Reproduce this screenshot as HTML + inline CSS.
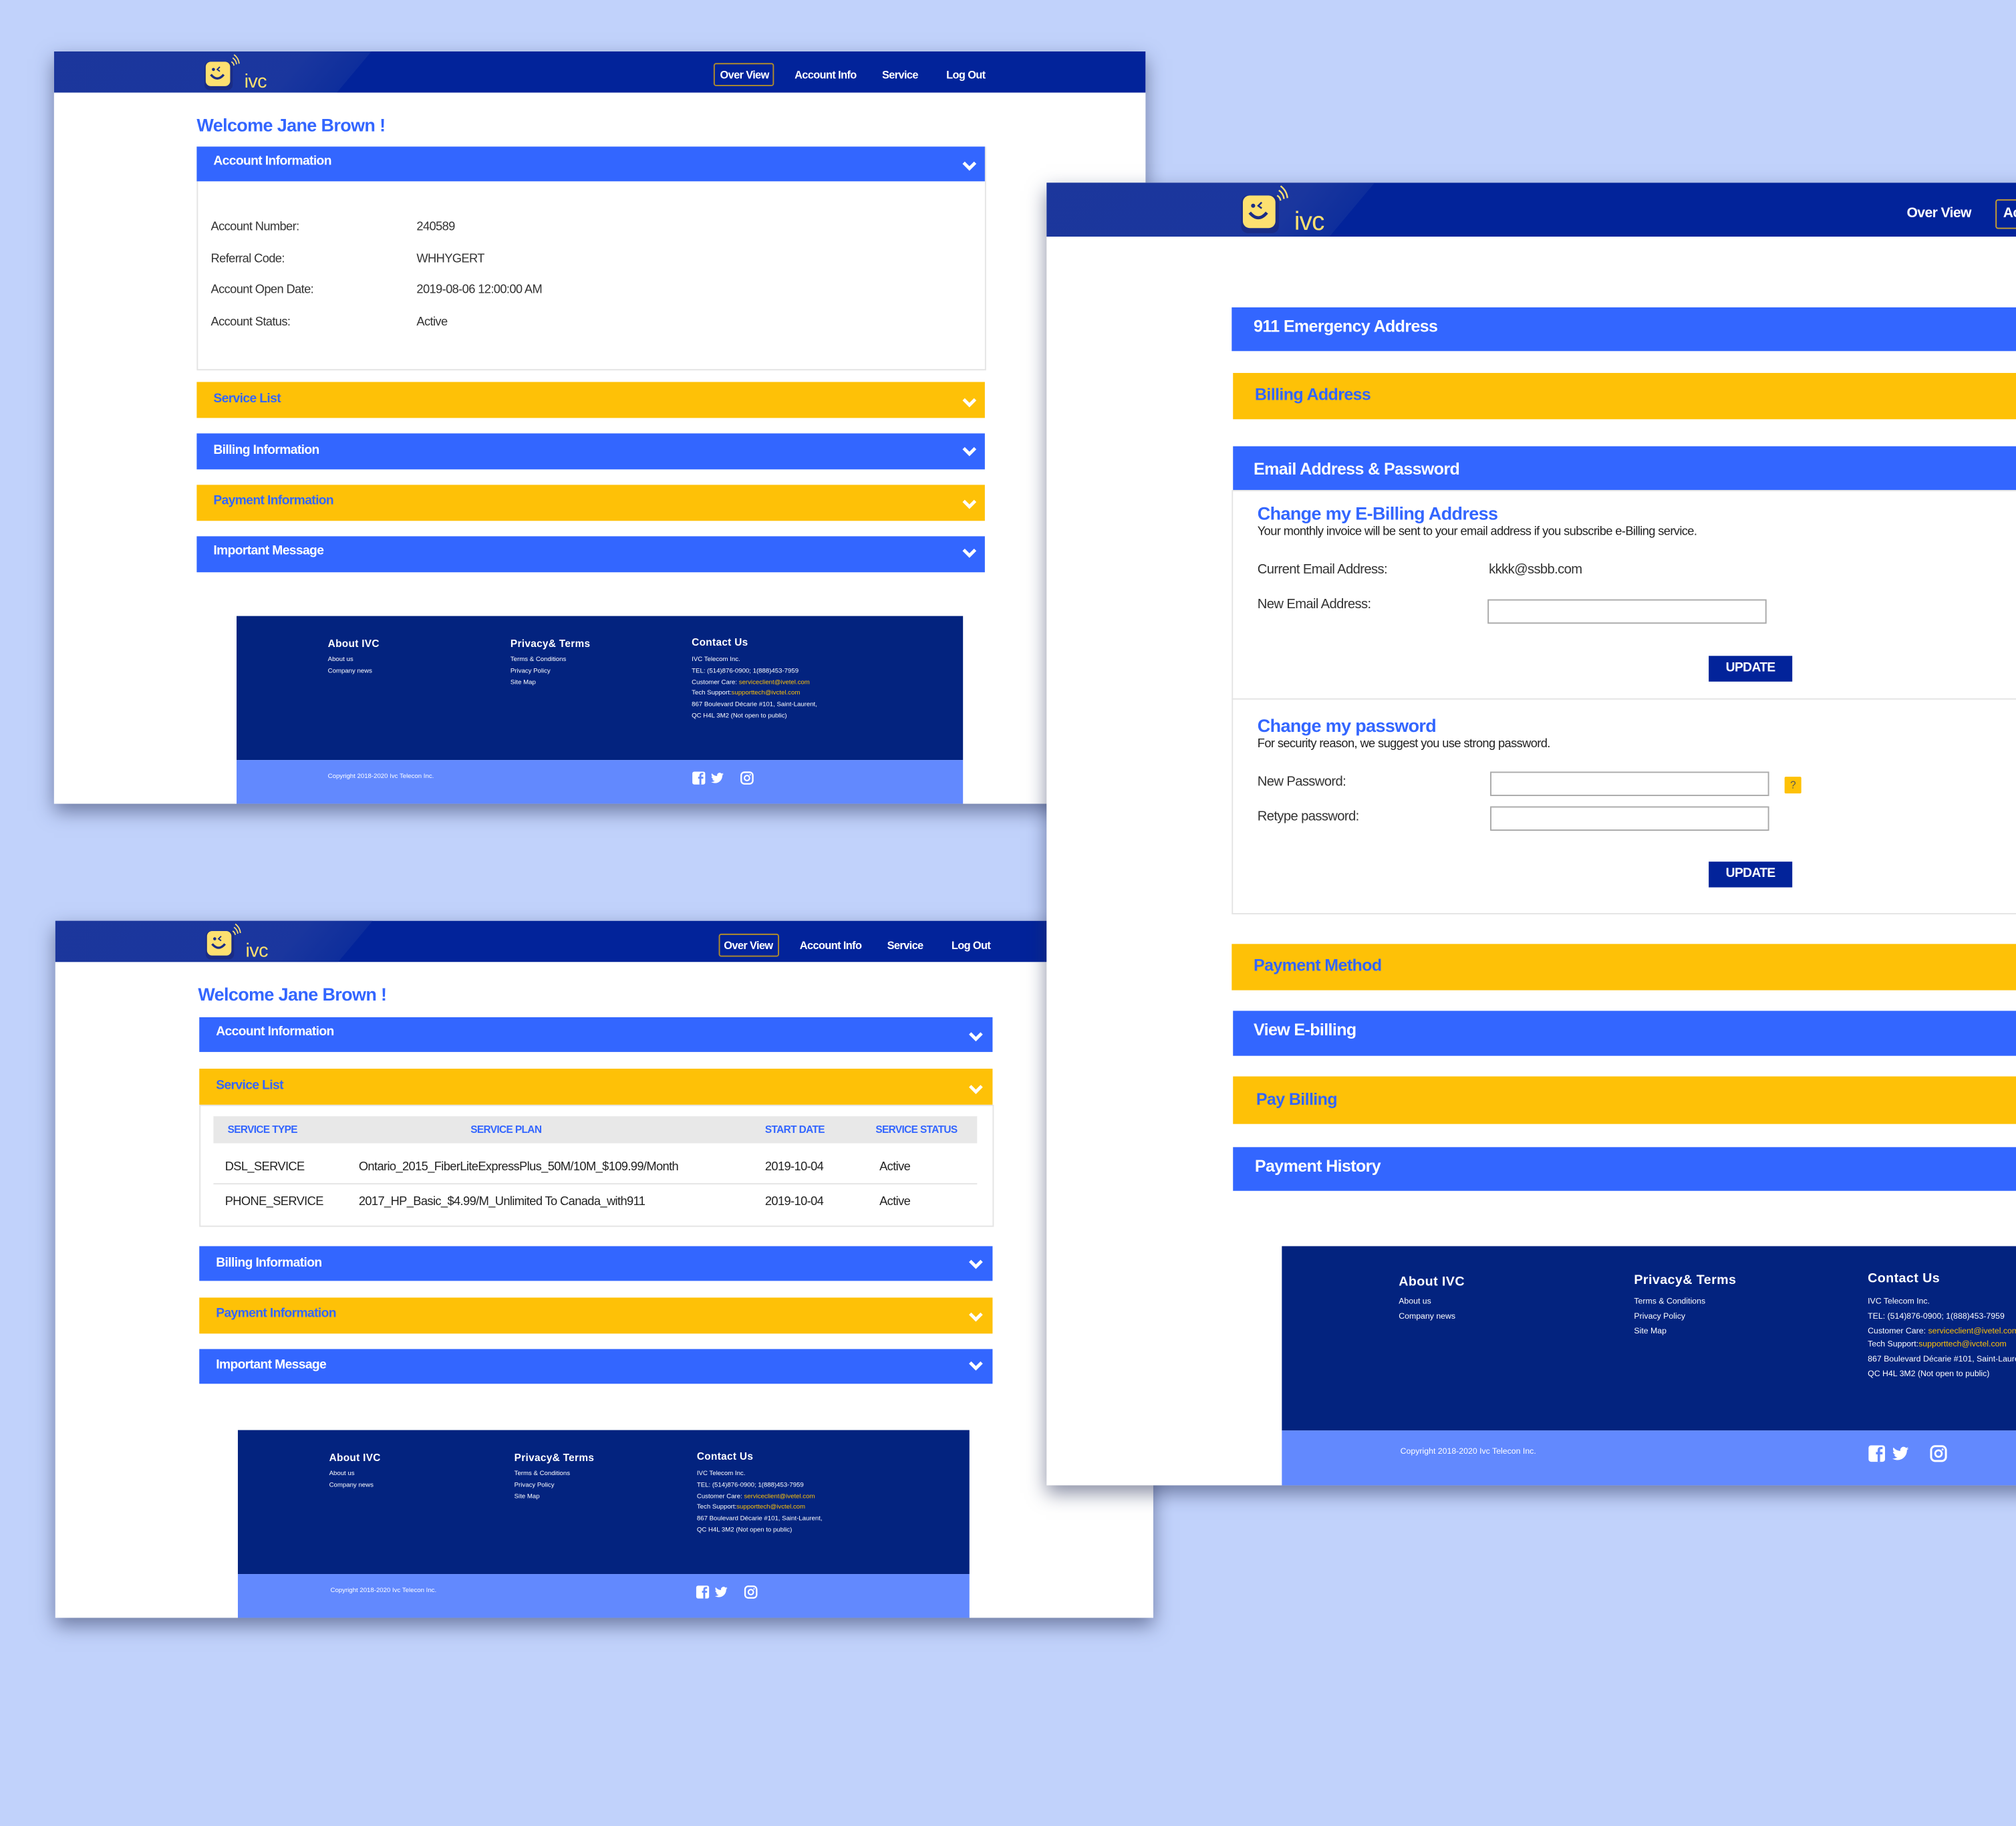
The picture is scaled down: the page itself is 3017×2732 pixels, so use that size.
<!DOCTYPE html>
<html><head><meta charset="utf-8">
<style>
html,body{margin:0;padding:0;width:3017px;height:2732px;overflow:hidden;background:#c1d2fb;}
#s{position:absolute;left:0;top:0;width:1568px;height:1420px;transform:scale(1.92411);transform-origin:0 0;font-family:"Liberation Sans",sans-serif;letter-spacing:-0.02em;}
.a{position:absolute;}
.win{position:absolute;background:#fff;box-shadow:0 6px 14px rgba(40,50,90,.55);overflow:hidden;}
.hdr{position:absolute;left:0;top:0;right:0;background:#02239a;overflow:hidden;}
.hdr:before{content:"";position:absolute;left:-40px;top:0;width:260px;height:100%;background:linear-gradient(90deg,#203a9c 0%,#1f3a9f 80%,#10309c 100%);transform:skewX(-40deg);transform-origin:0 100%;opacity:.85;}
.bar{position:absolute;color:#fff;font-weight:bold;}
.b{background:#3366ff;color:#fff;}
.y{background:#fec107;color:#3366ff;}
.nav{position:absolute;color:#fff;font-weight:bold;white-space:nowrap;}
.t{position:absolute;white-space:nowrap;}
.chev{position:absolute;}
.foot{position:absolute;width:565px;height:146px;transform-origin:0 0;}
.foot .d{position:absolute;left:0;top:0;width:100%;height:112px;background:#03237f;}
.foot .l{position:absolute;left:0;top:112px;width:100%;height:34px;background:#6289fe;}
.foot .h{position:absolute;color:#fff;font-weight:bold;font-size:8px;white-space:nowrap;letter-spacing:0.02em;}
.foot .s{position:absolute;color:#fff;font-size:5px;line-height:8.8px;white-space:nowrap;letter-spacing:0;}
.foot .s i{font-style:normal;color:#fec107;}
.inp{position:absolute;border:1px solid #aaa;background:#fff;}
.btn{position:absolute;background:#02239a;color:#fff;font-weight:bold;font-size:10px;text-align:center;}
</style></head><body><div id="s">

<!-- ===== Window 1 ===== -->
<div class="win" style="left:42px;top:40px;width:849px;height:585px;">
 <div class="hdr" style="height:32px;"></div>
 <svg class="a" style="left:116px;top:2px" width="60" height="30" viewBox="0 0 60 30">
  <rect x="1" y="6" width="22" height="22" rx="4" fill="#1a2c86"/>
  <rect x="2" y="6" width="19" height="19" rx="4" fill="#fde070"/>
  <circle cx="8" cy="12" r="1.2" fill="#1a2c86"/><path d="M13 10 l-2 2 2 1.5" stroke="#1a2c86" stroke-width="1" fill="none"/>
  <path d="M6 16 q5 6 10 0" stroke="#1a2c86" stroke-width="1.8" fill="none"/>
  <path d="M22 6 a4 4 0 0 1 2 3 M23 3 a7 7 0 0 1 3 5 M24 0.5 a10 10 0 0 1 4 7" stroke="#fde070" stroke-width="0.9" fill="none"/>
  <text x="32" y="26" font-size="15" fill="#fde070" font-family="Liberation Sans">ivc</text>
 </svg>
 <div class="a" style="left:513px;top:9px;width:45px;height:16px;border:1px solid #b08b2c;border-radius:2px;"></div>
 <div class="nav" style="left:518px;top:13px;font-size:8.5px;">Over View</div>
 <div class="nav" style="left:576px;top:13px;font-size:8.5px;">Account Info</div>
 <div class="nav" style="left:644px;top:13px;font-size:8.5px;">Service</div>
 <div class="nav" style="left:694px;top:13px;font-size:8.5px;">Log Out</div>
 <div class="t" style="left:111px;top:49px;font-size:14px;font-weight:bold;color:#3366ff;">Welcome Jane Brown !</div>
 <div class="a" style="left:111px;top:74px;width:612px;height:172px;border:1px solid #e4e4e4;"></div>
 <div class="bar b" style="left:111px;top:74px;width:613px;height:27px;font-size:10px;line-height:24px;padding-left:13px;box-sizing:border-box;">Account Information</div>
 <svg class="chev" style="left:706px;top:85px" width="12" height="8"><polyline points="1.5,1.5 6,6 10.5,1.5" stroke="#fff" stroke-width="2.5" fill="none"/></svg>
 <div class="t" style="left:122px;top:131px;font-size:9.5px;color:#333;">Account Number:</div><div class="t" style="left:282px;top:131px;font-size:9.5px;color:#333;">240589</div>
 <div class="t" style="left:122px;top:156px;font-size:9.5px;color:#333;">Referral Code:</div><div class="t" style="left:282px;top:156px;font-size:9.5px;color:#333;">WHHYGERT</div>
 <div class="t" style="left:122px;top:180px;font-size:9.5px;color:#333;">Account Open Date:</div><div class="t" style="left:282px;top:180px;font-size:9.5px;color:#333;">2019-08-06 12:00:00 AM</div>
 <div class="t" style="left:122px;top:205px;font-size:9.5px;color:#333;">Account Status:</div><div class="t" style="left:282px;top:205px;font-size:9.5px;color:#333;">Active</div>
 <div class="bar y" style="left:111px;top:257px;width:613px;height:28px;font-size:10px;line-height:27px;padding-left:13px;box-sizing:border-box;">Service List</div>
 <svg class="chev" style="left:706px;top:269px" width="12" height="8"><polyline points="1.5,1.5 6,6 10.5,1.5" stroke="#fff" stroke-width="2.5" fill="none"/></svg>
 <div class="bar b" style="left:111px;top:297px;width:613px;height:28px;font-size:10px;line-height:27px;padding-left:13px;box-sizing:border-box;">Billing Information</div>
 <svg class="chev" style="left:706px;top:307px" width="12" height="8"><polyline points="1.5,1.5 6,6 10.5,1.5" stroke="#fff" stroke-width="2.5" fill="none"/></svg>
 <div class="bar y" style="left:111px;top:337px;width:613px;height:28px;font-size:10px;line-height:25px;padding-left:13px;box-sizing:border-box;">Payment Information</div>
 <svg class="chev" style="left:706px;top:348px" width="12" height="8"><polyline points="1.5,1.5 6,6 10.5,1.5" stroke="#fff" stroke-width="2.5" fill="none"/></svg>
 <div class="bar b" style="left:111px;top:377px;width:613px;height:28px;font-size:10px;line-height:24px;padding-left:13px;box-sizing:border-box;">Important Message</div>
 <svg class="chev" style="left:706px;top:386px" width="12" height="8"><polyline points="1.5,1.5 6,6 10.5,1.5" stroke="#fff" stroke-width="2.5" fill="none"/></svg>
 <div class="foot" style="left:142px;top:439px;">
  <div class="d"></div><div class="l"></div>
  <div class="h" style="left:71px;top:17px;">About IVC</div>
  <div class="s" style="left:71px;top:30px;">About us<br>Company news</div>
  <div class="h" style="left:213px;top:17px;">Privacy&amp; Terms</div>
  <div class="s" style="left:213px;top:30px;">Terms &amp; Conditions<br>Privacy Policy<br>Site Map</div>
  <div class="h" style="left:354px;top:16px;">Contact Us</div>
  <div class="s" style="left:354px;top:30px;">IVC Telecom Inc.<br>TEL: (514)876-0900; 1(888)453-7959<br>Customer Care: <i>serviceclient@ivetel.com</i><br>Tech Support:<i>supporttech@ivctel.com</i><br>867 Boulevard Décarie #101, Saint-Laurent,<br>QC H4L 3M2 (Not open to public)</div>
  <div class="s" style="left:71px;top:121px;">Copyright 2018-2020 Ivc Telecon Inc.</div>
  <svg class="a" style="left:354px;top:120px" width="52" height="12" viewBox="0 0 52 12">
   <rect x="0.5" y="1" width="10" height="10" rx="1.5" fill="#fff"/><path d="M7.5 11 V6.5 H9 V5 H7.5 V4 Q7.5 3.3 8.3 3.3 H9 V2 H8 Q6 2 6 4 V5 H5 V6.5 H6 V11Z" fill="#6289fe"/>
   <path transform="translate(14.5,0.8) scale(0.45)" d="M23 4.6c-.8.4-1.7.6-2.6.7.9-.6 1.6-1.4 2-2.5-.9.5-1.9.9-2.9 1.1A4.5 4.5 0 0 0 11.8 8 12.8 12.8 0 0 1 2.5 3.3a4.5 4.5 0 0 0 1.4 6 4.5 4.5 0 0 1-2-.6v.1a4.5 4.5 0 0 0 3.6 4.4 4.5 4.5 0 0 1-2 .1 4.5 4.5 0 0 0 4.2 3.1A9 9 0 0 1 1 18.3 12.8 12.8 0 0 0 7.9 20.3c8.3 0 12.8-6.9 12.8-12.8v-.6c.9-.6 1.6-1.4 2.3-2.3z" fill="#fff"/>
   <rect x="38.5" y="1.5" width="9" height="9" rx="2.5" stroke="#fff" stroke-width="1.2" fill="none"/><circle cx="43" cy="6" r="2" stroke="#fff" stroke-width="1.1" fill="none"/><circle cx="45.5" cy="3.5" r="0.6" fill="#fff"/>
  </svg>
 </div>
</div>

<!-- ===== Window 2 ===== -->
<div class="win" style="left:43px;top:716px;width:854px;height:542px;">
 <div class="hdr" style="height:32px;"></div>
 <svg class="a" style="left:116px;top:2px" width="60" height="30" viewBox="0 0 60 30">
  <rect x="1" y="6" width="22" height="22" rx="4" fill="#1a2c86"/>
  <rect x="2" y="6" width="19" height="19" rx="4" fill="#fde070"/>
  <circle cx="8" cy="12" r="1.2" fill="#1a2c86"/><path d="M13 10 l-2 2 2 1.5" stroke="#1a2c86" stroke-width="1" fill="none"/>
  <path d="M6 16 q5 6 10 0" stroke="#1a2c86" stroke-width="1.8" fill="none"/>
  <path d="M22 6 a4 4 0 0 1 2 3 M23 3 a7 7 0 0 1 3 5 M24 0.5 a10 10 0 0 1 4 7" stroke="#fde070" stroke-width="0.9" fill="none"/>
  <text x="32" y="26" font-size="15" fill="#fde070" font-family="Liberation Sans">ivc</text>
 </svg>
 <div class="a" style="left:516px;top:10px;width:45px;height:16px;border:1px solid #b08b2c;border-radius:2px;"></div>
 <div class="nav" style="left:520px;top:14px;font-size:8.5px;">Over View</div>
 <div class="nav" style="left:579px;top:14px;font-size:8.5px;">Account Info</div>
 <div class="nav" style="left:647px;top:14px;font-size:8.5px;">Service</div>
 <div class="nav" style="left:697px;top:14px;font-size:8.5px;">Log Out</div>
 <div class="t" style="left:111px;top:49px;font-size:14px;font-weight:bold;color:#3366ff;">Welcome Jane Brown !</div>
 <div class="bar b" style="left:112px;top:75px;width:617px;height:27px;font-size:10px;line-height:24px;padding-left:13px;box-sizing:border-box;">Account Information</div>
 <svg class="chev" style="left:710px;top:86px" width="12" height="8"><polyline points="1.5,1.5 6,6 10.5,1.5" stroke="#fff" stroke-width="2.5" fill="none"/></svg>
 <div class="a" style="left:112px;top:143px;width:616px;height:93px;border:1px solid #e4e4e4;"></div>
 <div class="bar y" style="left:112px;top:115px;width:617px;height:28px;font-size:10px;line-height:27px;padding-left:13px;box-sizing:border-box;">Service List</div>
 <svg class="chev" style="left:710px;top:127px" width="12" height="8"><polyline points="1.5,1.5 6,6 10.5,1.5" stroke="#fff" stroke-width="2.5" fill="none"/></svg>
 <div class="a" style="left:123px;top:152px;width:594px;height:21px;background:#e8e8e8;"></div>
 <div class="t" style="left:134px;top:158px;font-size:8px;font-weight:bold;color:#3366ff;">SERVICE TYPE</div>
 <div class="t" style="left:323px;top:158px;font-size:8px;font-weight:bold;color:#3366ff;">SERVICE PLAN</div>
 <div class="t" style="left:552px;top:158px;font-size:8px;font-weight:bold;color:#3366ff;">START DATE</div>
 <div class="t" style="left:638px;top:158px;font-size:8px;font-weight:bold;color:#3366ff;">SERVICE STATUS</div>
 <div class="t" style="left:132px;top:186px;font-size:9.5px;color:#222;">DSL_SERVICE</div>
 <div class="t" style="left:236px;top:186px;font-size:9.5px;color:#222;">Ontario_2015_FiberLiteExpressPlus_50M/10M_$109.99/Month</div>
 <div class="t" style="left:552px;top:186px;font-size:9.5px;color:#222;">2019-10-04</div>
 <div class="t" style="left:641px;top:186px;font-size:9.5px;color:#222;">Active</div>
 <div class="a" style="left:123px;top:204px;width:594px;height:1px;background:#e4e4e4;"></div>
 <div class="t" style="left:132px;top:213px;font-size:9.5px;color:#222;">PHONE_SERVICE</div>
 <div class="t" style="left:236px;top:213px;font-size:9.5px;color:#222;">2017_HP_Basic_$4.99/M_Unlimited To Canada_with911</div>
 <div class="t" style="left:552px;top:213px;font-size:9.5px;color:#222;">2019-10-04</div>
 <div class="t" style="left:641px;top:213px;font-size:9.5px;color:#222;">Active</div>
 <div class="bar b" style="left:112px;top:253px;width:617px;height:27px;font-size:10px;line-height:28px;padding-left:13px;box-sizing:border-box;">Billing Information</div>
 <svg class="chev" style="left:710px;top:263px" width="12" height="8"><polyline points="1.5,1.5 6,6 10.5,1.5" stroke="#fff" stroke-width="2.5" fill="none"/></svg>
 <div class="bar y" style="left:112px;top:293px;width:617px;height:28px;font-size:10px;line-height:25px;padding-left:13px;box-sizing:border-box;">Payment Information</div>
 <svg class="chev" style="left:710px;top:304px" width="12" height="8"><polyline points="1.5,1.5 6,6 10.5,1.5" stroke="#fff" stroke-width="2.5" fill="none"/></svg>
 <div class="bar b" style="left:112px;top:333px;width:617px;height:27px;font-size:10px;line-height:25px;padding-left:13px;box-sizing:border-box;">Important Message</div>
 <svg class="chev" style="left:710px;top:342px" width="12" height="8"><polyline points="1.5,1.5 6,6 10.5,1.5" stroke="#fff" stroke-width="2.5" fill="none"/></svg>
 <div class="foot" style="left:142px;top:396px;width:569px;">
  <div class="d"></div><div class="l"></div>
  <div class="h" style="left:71px;top:17px;">About IVC</div>
  <div class="s" style="left:71px;top:30px;">About us<br>Company news</div>
  <div class="h" style="left:215px;top:17px;">Privacy&amp; Terms</div>
  <div class="s" style="left:215px;top:30px;">Terms &amp; Conditions<br>Privacy Policy<br>Site Map</div>
  <div class="h" style="left:357px;top:16px;">Contact Us</div>
  <div class="s" style="left:357px;top:30px;">IVC Telecom Inc.<br>TEL: (514)876-0900; 1(888)453-7959<br>Customer Care: <i>serviceclient@ivetel.com</i><br>Tech Support:<i>supporttech@ivctel.com</i><br>867 Boulevard Décarie #101, Saint-Laurent,<br>QC H4L 3M2 (Not open to public)</div>
  <div class="s" style="left:72px;top:121px;">Copyright 2018-2020 Ivc Telecon Inc.</div>
  <svg class="a" style="left:356px;top:120px" width="52" height="12" viewBox="0 0 52 12">
   <rect x="0.5" y="1" width="10" height="10" rx="1.5" fill="#fff"/><path d="M7.5 11 V6.5 H9 V5 H7.5 V4 Q7.5 3.3 8.3 3.3 H9 V2 H8 Q6 2 6 4 V5 H5 V6.5 H6 V11Z" fill="#6289fe"/>
   <path transform="translate(14.5,0.8) scale(0.45)" d="M23 4.6c-.8.4-1.7.6-2.6.7.9-.6 1.6-1.4 2-2.5-.9.5-1.9.9-2.9 1.1A4.5 4.5 0 0 0 11.8 8 12.8 12.8 0 0 1 2.5 3.3a4.5 4.5 0 0 0 1.4 6 4.5 4.5 0 0 1-2-.6v.1a4.5 4.5 0 0 0 3.6 4.4 4.5 4.5 0 0 1-2 .1 4.5 4.5 0 0 0 4.2 3.1A9 9 0 0 1 1 18.3 12.8 12.8 0 0 0 7.9 20.3c8.3 0 12.8-6.9 12.8-12.8v-.6c.9-.6 1.6-1.4 2.3-2.3z" fill="#fff"/>
   <rect x="38.5" y="1.5" width="9" height="9" rx="2.5" stroke="#fff" stroke-width="1.2" fill="none"/><circle cx="43" cy="6" r="2" stroke="#fff" stroke-width="1.1" fill="none"/><circle cx="45.5" cy="3.5" r="0.6" fill="#fff"/>
  </svg>
 </div>
</div>

<!-- ===== Window 3 ===== -->
<div class="win" style="left:814px;top:142px;width:780px;height:1013px;">
 <div class="hdr" style="height:42px;"></div>
 <svg class="a" style="left:150px;top:2px" width="80" height="40" viewBox="0 0 60 30">
  <rect x="1" y="6" width="22" height="22" rx="4" fill="#1a2c86"/>
  <rect x="2" y="6" width="19" height="19" rx="4" fill="#fde070"/>
  <circle cx="8" cy="12" r="1.2" fill="#1a2c86"/><path d="M13 10 l-2 2 2 1.5" stroke="#1a2c86" stroke-width="1" fill="none"/>
  <path d="M6 16 q5 6 10 0" stroke="#1a2c86" stroke-width="1.8" fill="none"/>
  <path d="M22 6 a4 4 0 0 1 2 3 M23 3 a7 7 0 0 1 3 5 M24 0.5 a10 10 0 0 1 4 7" stroke="#fde070" stroke-width="0.9" fill="none"/>
  <text x="32" y="26" font-size="15" fill="#fde070" font-family="Liberation Sans">ivc</text>
 </svg>
 <div class="nav" style="left:669px;top:18px;font-size:11px;">Over View</div>
 <div class="a" style="left:738px;top:13px;width:40px;height:21px;border:1px solid #c9a030;border-radius:2px;"></div>
 <div class="nav" style="left:744px;top:18px;font-size:11px;">Ac</div>

 <div class="bar b" style="left:144px;top:97px;width:640px;height:34px;font-size:13px;line-height:30px;padding-left:17px;box-sizing:border-box;">911 Emergency Address</div>
 <div class="bar y" style="left:145px;top:148px;width:640px;height:36px;font-size:13px;line-height:34px;padding-left:17px;box-sizing:border-box;">Billing Address</div>
 <div class="bar b" style="left:145px;top:205px;width:640px;height:34px;font-size:13px;line-height:36px;padding-left:16px;box-sizing:border-box;">Email Address &amp; Password</div>
 <div class="a" style="left:144px;top:239px;width:640px;height:328px;border:1px solid #e4e4e4;"></div>
 <div class="t" style="left:164px;top:249px;font-size:14px;font-weight:bold;color:#3366ff;">Change my E-Billing Address</div>
 <div class="t" style="left:164px;top:266px;font-size:9.5px;color:#222;">Your monthly invoice will be sent to your email address if you subscribe e-Billing service.</div>
 <div class="t" style="left:164px;top:295px;font-size:10.5px;color:#333;">Current Email Address:</div>
 <div class="t" style="left:344px;top:295px;font-size:10.5px;color:#333;">kkkk@ssbb.com</div>
 <div class="t" style="left:164px;top:322px;font-size:10.5px;color:#333;">New Email Address:</div>
 <div class="inp" style="left:343px;top:324px;width:215px;height:17px;"></div>
 <div class="btn" style="left:515px;top:368px;width:65px;height:20px;line-height:20px;">UPDATE</div>
 <div class="a" style="left:144px;top:401px;width:640px;height:1px;background:#e4e4e4;"></div>
 <div class="t" style="left:164px;top:414px;font-size:14px;font-weight:bold;color:#3366ff;">Change my password</div>
 <div class="t" style="left:164px;top:431px;font-size:9.5px;color:#222;">For security reason, we suggest you use strong password.</div>
 <div class="t" style="left:164px;top:460px;font-size:10.5px;color:#333;">New Password:</div>
 <div class="inp" style="left:345px;top:458px;width:215px;height:17px;"></div>
 <div class="a" style="left:574px;top:462px;width:13px;height:13px;background:#fec107;border-radius:1px;font-size:8px;color:#555;text-align:center;line-height:13px;">?</div>
 <div class="t" style="left:164px;top:487px;font-size:10.5px;color:#333;">Retype password:</div>
 <div class="inp" style="left:345px;top:485px;width:215px;height:17px;"></div>
 <div class="btn" style="left:515px;top:528px;width:65px;height:20px;line-height:20px;">UPDATE</div>

 <div class="bar y" style="left:144px;top:592px;width:640px;height:36px;font-size:13px;line-height:33px;padding-left:17px;box-sizing:border-box;">Payment Method</div>
 <div class="bar b" style="left:145px;top:644px;width:640px;height:35px;font-size:13px;line-height:30px;padding-left:16px;box-sizing:border-box;">View E-billing</div>
 <div class="bar y" style="left:145px;top:695px;width:640px;height:37px;font-size:13px;line-height:35px;padding-left:18px;box-sizing:border-box;">Pay Billing</div>
 <div class="bar b" style="left:145px;top:750px;width:640px;height:34px;font-size:13px;line-height:30px;padding-left:17px;box-sizing:border-box;">Payment History</div>

 <div class="foot" style="left:183px;top:827px;transform:scale(1.28);">
  <div class="d"></div><div class="l"></div>
  <div class="h" style="left:71px;top:17px;">About IVC</div>
  <div class="s" style="left:71px;top:30px;">About us<br>Company news</div>
  <div class="h" style="left:214px;top:16px;">Privacy&amp; Terms</div>
  <div class="s" style="left:214px;top:30px;">Terms &amp; Conditions<br>Privacy Policy<br>Site Map</div>
  <div class="h" style="left:356px;top:15px;">Contact Us</div>
  <div class="s" style="left:356px;top:30px;">IVC Telecom Inc.<br>TEL: (514)876-0900; 1(888)453-7959<br>Customer Care: <i>serviceclient@ivetel.com</i><br>Tech Support:<i>supporttech@ivctel.com</i><br>867 Boulevard Décarie #101, Saint-Laurent,<br>QC H4L 3M2 (Not open to public)</div>
  <div class="s" style="left:72px;top:121px;">Copyright 2018-2020 Ivc Telecon Inc.</div>
  <svg class="a" style="left:356px;top:120px" width="52" height="12" viewBox="0 0 52 12">
   <rect x="0.5" y="1" width="10" height="10" rx="1.5" fill="#fff"/><path d="M7.5 11 V6.5 H9 V5 H7.5 V4 Q7.5 3.3 8.3 3.3 H9 V2 H8 Q6 2 6 4 V5 H5 V6.5 H6 V11Z" fill="#6289fe"/>
   <path transform="translate(14.5,0.8) scale(0.45)" d="M23 4.6c-.8.4-1.7.6-2.6.7.9-.6 1.6-1.4 2-2.5-.9.5-1.9.9-2.9 1.1A4.5 4.5 0 0 0 11.8 8 12.8 12.8 0 0 1 2.5 3.3a4.5 4.5 0 0 0 1.4 6 4.5 4.5 0 0 1-2-.6v.1a4.5 4.5 0 0 0 3.6 4.4 4.5 4.5 0 0 1-2 .1 4.5 4.5 0 0 0 4.2 3.1A9 9 0 0 1 1 18.3 12.8 12.8 0 0 0 7.9 20.3c8.3 0 12.8-6.9 12.8-12.8v-.6c.9-.6 1.6-1.4 2.3-2.3z" fill="#fff"/>
   <rect x="38.5" y="1.5" width="9" height="9" rx="2.5" stroke="#fff" stroke-width="1.2" fill="none"/><circle cx="43" cy="6" r="2" stroke="#fff" stroke-width="1.1" fill="none"/><circle cx="45.5" cy="3.5" r="0.6" fill="#fff"/>
  </svg>
 </div>
</div>

</div></body></html>
